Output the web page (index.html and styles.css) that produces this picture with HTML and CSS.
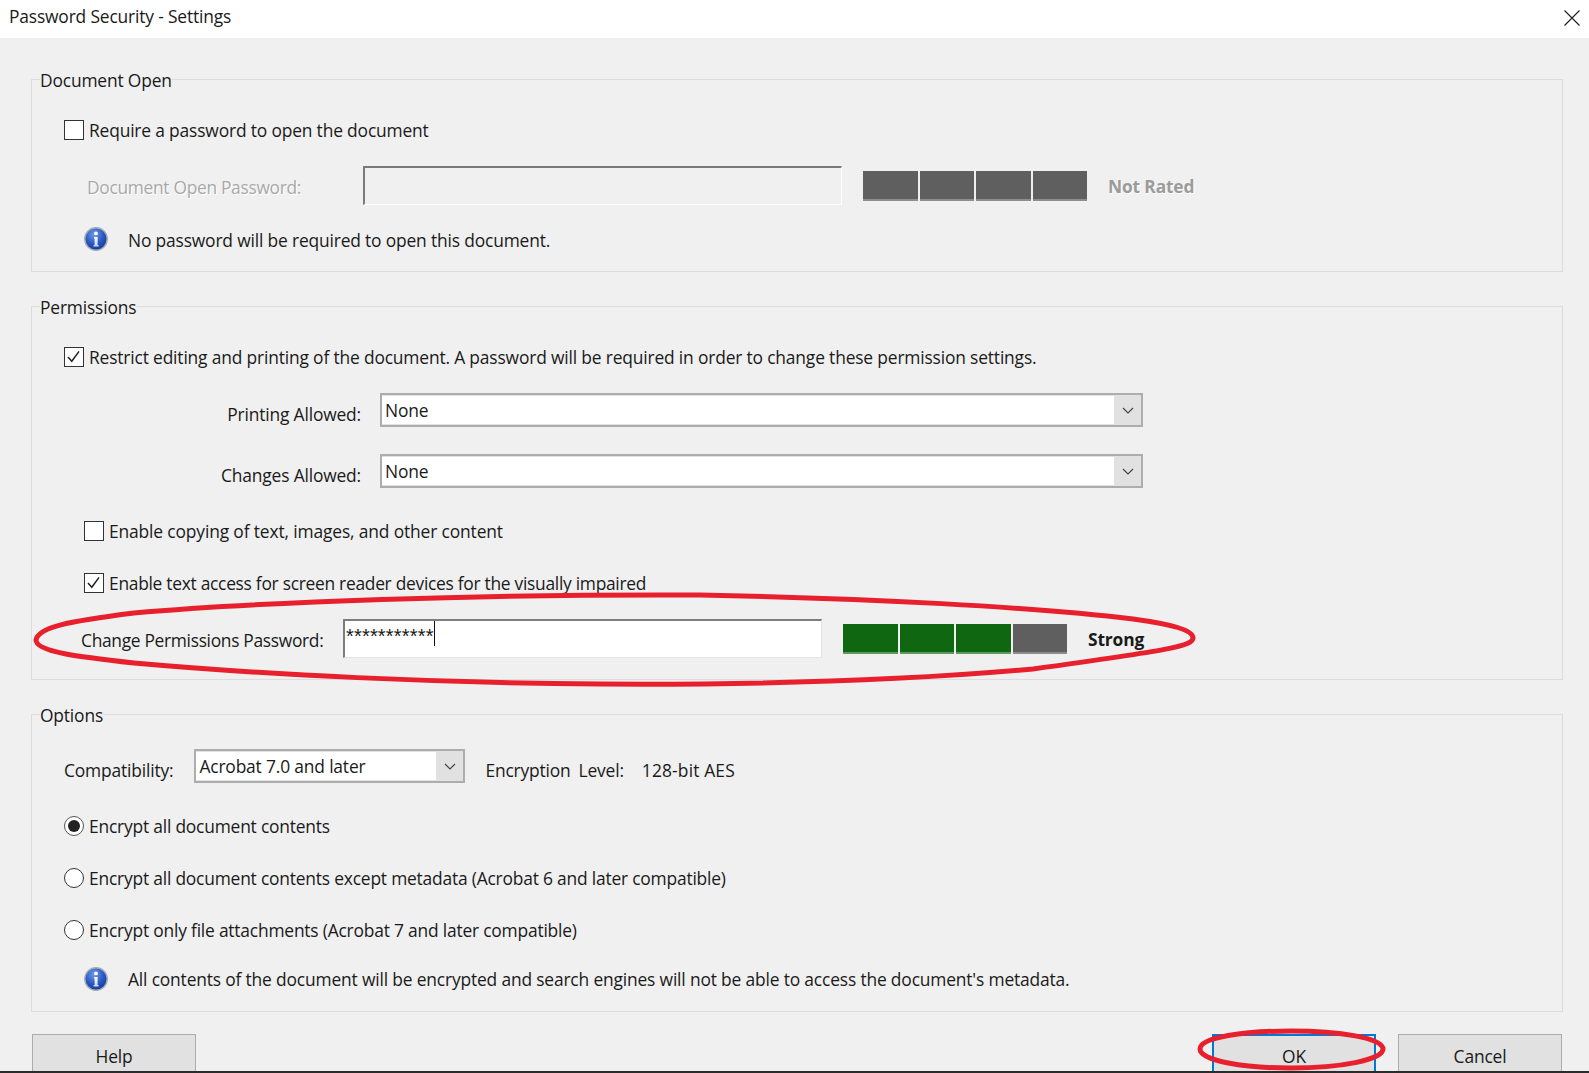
FILE: index.html
```html
<!DOCTYPE html>
<html lang="en">
<head>
<meta charset="utf-8">
<title>Password Security - Settings</title>
<link rel="stylesheet" href="styles.css">
</head>
<body>
<svg width="0" height="0" class="defs">
  <defs>
    <radialGradient id="infoFill" cx="42%" cy="30%" r="75%">
      <stop offset="0" stop-color="#6f9bea"/>
      <stop offset="0.55" stop-color="#2a59c2"/>
      <stop offset="1" stop-color="#143793"/>
    </radialGradient>
    <linearGradient id="infoI" x1="0" y1="0" x2="0" y2="1">
      <stop offset="0" stop-color="#fff"/>
      <stop offset="1" stop-color="#c5d3f0"/>
    </linearGradient>
    <symbol id="info" viewBox="0 0 24 24">
      <circle cx="12" cy="12" r="11.2" fill="url(#infoFill)" stroke="#a3abb8" stroke-width="1.4"/>
      <circle cx="12" cy="6.4" r="1.9" fill="#fff"/>
      <path d="M10 10h3.6v8h1v1.4H9.6V18h1v-6.6h-.6z" fill="url(#infoI)"/>
    </symbol>
    <symbol id="chev" viewBox="0 0 12 7">
      <path d="M1 1l5 5 5-5" fill="none" stroke="#444" stroke-width="1.2"/>
    </symbol>
    <symbol id="tick" viewBox="0 0 20 20">
      <path d="M3.5 10.5l4.5 5 8.5-11.5" fill="none" stroke="#222" stroke-width="1.8"/>
    </symbol>
  </defs>
</svg>

<div class="dialog">
  <header class="titlebar">
    <span class="title">Password Security - Settings</span>
    <svg class="close" viewBox="0 0 16 16"><path d="M0.5 0.5l15 15M15.5 0.5l-15 15" stroke="#222" stroke-width="1.2" fill="none"/></svg>
  </header>

  <main class="content">
    <fieldset class="group group-open">
      <legend>Document Open</legend>
      <label class="check r-require"><span class="box"></span><span>Require a password to open the document</span></label>
      <div class="pw-row r-openpw">
        <span class="pw-label disabled">Document Open Password:</span>
        <div class="pw-input"></div>
        <div class="meter">
          <i class="cell"></i><i class="cell"></i><i class="cell"></i><i class="cell"></i>
        </div>
        <span class="rating rating-off">Not Rated</span>
      </div>
      <div class="note r-note1"><svg class="info"><use href="#info"/></svg><span class="note-text">No password will be required to open this document.</span></div>
    </fieldset>

    <fieldset class="group group-perm">
      <legend>Permissions</legend>
      <label class="check r-restrict"><span class="box"><svg class="tick"><use href="#tick"/></svg></span><span>Restrict editing and printing of the document. A password will be required in order to change these permission settings.</span></label>
      <div class="sel-row r-print">
        <span class="sel-label">Printing Allowed:</span>
        <div class="select select-wide"><span class="sel-value">None</span><span class="sel-arrow"><svg class="chev"><use href="#chev"/></svg></span></div>
      </div>
      <div class="sel-row r-change">
        <span class="sel-label">Changes Allowed:</span>
        <div class="select select-wide"><span class="sel-value">None</span><span class="sel-arrow"><svg class="chev"><use href="#chev"/></svg></span></div>
      </div>
      <label class="check sub r-copy"><span class="box"></span><span>Enable copying of text, images, and other content</span></label>
      <label class="check sub r-access"><span class="box"><svg class="tick"><use href="#tick"/></svg></span><span>Enable text access for screen reader devices for the visually impaired</span></label>
      <div class="pw-row r-permpw">
        <span class="pw-label">Change Permissions Password:</span>
        <div class="pw-input active"><span class="stars">***********</span><span class="caret"></span></div>
        <div class="meter">
          <i class="cell on"></i><i class="cell on"></i><i class="cell on"></i><i class="cell"></i>
        </div>
        <span class="rating">Strong</span>
      </div>
    </fieldset>

    <fieldset class="group group-options">
      <legend>Options</legend>
      <div class="compat r-compat">
        <span class="compat-label">Compatibility:</span>
        <div class="select select-compat"><span class="sel-value">Acrobat 7.0 and later</span><span class="sel-arrow"><svg class="chev"><use href="#chev"/></svg></span></div>
        <span class="enc enc-a">Encryption</span>
        <span class="enc enc-b">Level:</span>
        <span class="enc enc-c">128-bit AES</span>
      </div>
      <label class="check radio-row r-radio1"><span class="radio selected"></span><span>Encrypt all document contents</span></label>
      <label class="check radio-row r-radio2"><span class="radio"></span><span>Encrypt all document contents except metadata (Acrobat 6 and later compatible)</span></label>
      <label class="check radio-row r-radio3"><span class="radio"></span><span>Encrypt only file attachments (Acrobat 7 and later compatible)</span></label>
      <div class="note r-note2"><svg class="info"><use href="#info"/></svg><span class="note-text">All contents of the document will be encrypted and search engines will not be able to access the document's metadata.</span></div>
    </fieldset>

    <footer class="buttons">
      <button class="btn">Help</button>
      <span class="spacer"></span>
      <button class="btn btn-ok">OK</button>
      <button class="btn">Cancel</button>
    </footer>
  </main>
</div>

<svg class="mark mark-pw" viewBox="0 0 1589 1073">
  <path d="M36 640C38 627 70 621 134 613C260 602 480 594 700 595C867 598 1033 607 1133 619C1170 624 1193 630 1193 638C1193 646 1170 650 1033 669C900 681 760 685 600 684C440 683 268 675 134 663C80 657 36 652 36 640Z"/>
</svg>
<svg class="mark mark-ok" viewBox="0 0 1589 1073">
  <path d="M1200 1049C1200 1037 1245 1031 1291 1031C1340 1031 1383 1038 1383 1049C1383 1060 1340 1068 1291 1068C1245 1068 1200 1061 1200 1049Z"/>
</svg>
<div class="taskbar"></div>
</body>
</html>
```
FILE: styles.css
```css
* { box-sizing: border-box; }
html, body { margin: 0; height: 100%; }
body {
  position: relative;
  width: 1589px;
  height: 1073px;
  overflow: hidden;
  background: #f0f0f0;
  color: #1a1a1a;
  font-family: "Open Sans", "Noto Sans", sans-serif;
  font-size: 17.4px;
  letter-spacing: -0.165px;
}
.defs { position: absolute; }
.dialog { display: flex; flex-direction: column; height: 1073px; }

.titlebar {
  flex: none;
  height: 38px;
  background: #fff;
  display: flex;
  align-items: center;
  justify-content: space-between;
  padding: 0 9px 7px 9px;
}
.close { width: 16px; height: 16px; margin-top: 5px; }

.content { padding: 0 26px 0 31px; }

.group {
  position: relative;
  margin: 0;
  padding: 0 0 0 32px;
  border: 1px solid #dcdcdc;
  min-width: 0;
}
.group legend { margin-left: -24px; padding: 0; height: 24px; line-height: 26px; }
.group-open { margin-top: 29px; height: 205px; }
.group-perm { margin-top: 22px; height: 386px; }
.group-options { margin-top: 22px; height: 310px; }

.check { display: flex; align-items: center; height: 20px; white-space: nowrap; }
.box, .radio {
  flex: none;
  width: 20px;
  height: 20px;
  margin-right: 5px;
  background: #fff;
  border: 1.5px solid #333;
}
.radio { border-radius: 50%; position: relative; border-width: 1px; }
.radio.selected { border: 1.5px solid #555; }
.radio.selected::after {
  content: "";
  position: absolute;
  inset: 3px;
  border-radius: 50%;
  background: #222;
}
.radio-row { letter-spacing: -0.2px; }
.tick { display: block; width: 17px; height: 17px; }
.sub { margin-left: 20px; }
.sub .box { margin-right: 5px; }
.r-copy { letter-spacing: -0.14px; }
.r-access { letter-spacing: -0.285px; }

.r-require { margin-top: 29px; }
.r-openpw { margin-top: 26px; }
.r-note1 { margin-top: 22px; }
.r-restrict { margin-top: 29px; }
.r-print { margin-top: 26px; }
.r-change { margin-top: 27px; }
.r-copy { margin-top: 33px; }
.r-access { margin-top: 32px; }
.r-permpw { margin-top: 26px; }
.r-compat { margin-top: 23px; }
.r-radio1 { margin-top: 33px; }
.r-radio2, .r-radio3 { margin-top: 32px; }
.r-note2 { margin-top: 27px; }

.pw-row { display: flex; align-items: center; height: 39px; }
.pw-label { width: 276px; margin-left: 23px; flex: none; padding-top: 3px; white-space: nowrap; letter-spacing: -0.32px; }
.r-permpw .pw-label { margin-left: 17px; width: 262px; }
.disabled { color: #a9a9a9; text-shadow: 1px 1px 0 #fff; }
.pw-input {
  width: 479px;
  height: 39px;
  flex: none;
  border-style: solid;
  border-width: 2px 1px 1px 2px;
  border-color: #7a7a7a #fff #fff #7a7a7a;
  display: flex;
  align-items: flex-start;
}
.pw-input.active { background: #fff; border-color: #7d7d7d #e3e3e3 #e3e3e3 #7d7d7d; }
.stars { font-family: "Liberation Sans", sans-serif; font-size: 20px; line-height: 20px; letter-spacing: 0.18px; margin-left: 1px; margin-top: 5px; }
.caret { width: 1px; height: 25px; background: #111; }

.meter { display: flex; gap: 2px; width: 224px; height: 30px; margin-left: 21px; flex: none; }
.cell { flex: 1; background: #5f5f5f; border-bottom: 2px solid #8d8d8d; }
.cell.on { background: #0f6712; border-bottom-color: #5d9a5f; }
.rating { margin-left: 21px; font-weight: 700; padding-top: 1px; }
.rating-off { color: #9b9b9b; text-shadow: 1px 1px 0 #fff; }

.note { display: flex; align-items: center; height: 24px; margin-left: 20px; white-space: nowrap; }
.note-text { padding-top: 2px; }
.r-note2 .note-text { padding-top: 0; }
.info { width: 24px; height: 24px; margin-right: 20px; flex: none; }

.sel-row { display: flex; align-items: center; height: 34px; }
.sel-label { width: 297px; text-align: right; padding-top: 8px; flex: none; }
.select {
  display: flex;
  height: 34px;
  margin-left: 19px;
  background: #e1e1e1;
  border: 2px solid #adadad;
  flex: none;
}
.select-wide { width: 763px; }
.sel-value { flex: 1; background: #fff; margin: 1px 0; padding-left: 3px; line-height: 28px; }
.sel-arrow { width: 27px; display: flex; align-items: center; justify-content: center; }
.chev { width: 12px; height: 7px; }

.compat { display: flex; align-items: center; height: 34px; }
.compat-label { flex: none; padding-top: 8px; }
.select-compat { width: 271px; margin-left: 21px; }
.enc { padding-top: 8px; white-space: nowrap; flex: none; }
.enc-a { margin-left: 20px; }
.enc-b { margin-left: 8px; }
.enc-c { margin-left: 18px; letter-spacing: 0.15px; }

.buttons { display: flex; gap: 22px; margin-top: 22px; padding: 0 1px; }
.spacer { flex: 1; }
.btn {
  width: 164px;
  height: 48px;
  background: #e1e1e1;
  border: 1px solid #adadad;
  font: inherit;
  letter-spacing: inherit;
  color: inherit;
  padding: 0 0 4px;
}
.btn-ok { border: 2px solid #0078d7; }

.mark {
  position: absolute;
  left: 0;
  top: 0;
  width: 1589px;
  height: 1073px;
  pointer-events: none;
}
.mark path { fill: none; stroke: #e8202e; stroke-width: 5; }
.taskbar { position: absolute; left: 0; right: 0; bottom: 0; height: 2px; background: #2b2b2b; }
```
